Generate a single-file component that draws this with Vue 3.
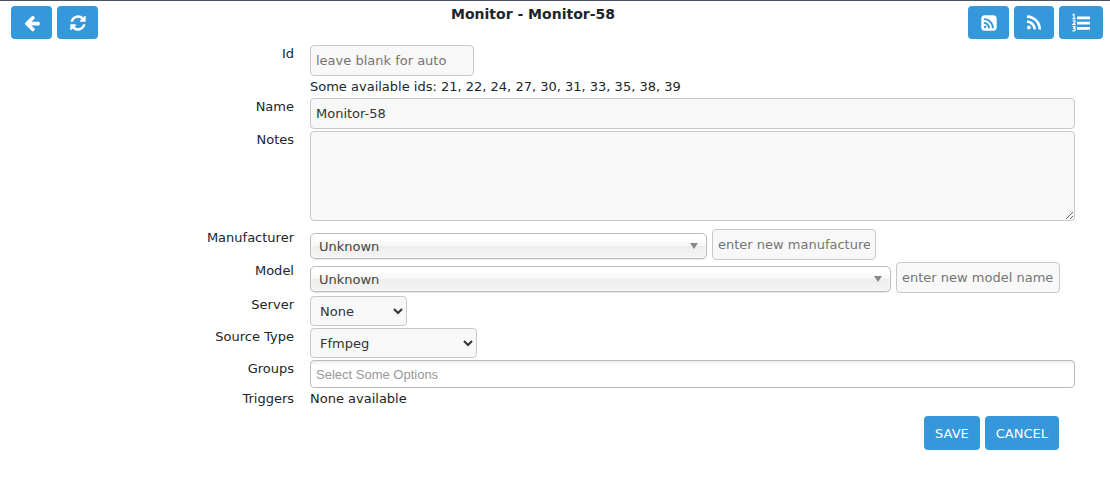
<script setup>
import { ref } from 'vue'

const id = ref('')
const name = ref('Monitor-58')
const notes = ref('')
const manufacturer = ref('Unknown')
const newManufacturer = ref('')
const model = ref('Unknown')
const newModel = ref('')
const server = ref('None')
const sourceType = ref('Ffmpeg')
const groups = ref('')
const availableIds = [21, 22, 24, 27, 30, 31, 33, 35, 38, 39]
</script>

<template>
  <div class="page">
    <header class="bar">
      <div class="tools">
        <button type="button" class="btn icon-btn" aria-label="Back">
          <svg width="18" height="18" viewBox="0 0 1792 1792"><path d="M1664 896v128q0 53-32.5 90.5t-84.5 37.5h-704l293 294q38 36 38 90t-38 90l-75 76q-37 37-90 37-52 0-91-37l-651-652q-37-37-37-90 0-52 37-91l651-650q38-38 91-38 52 0 90 38l75 74q38 38 38 91t-38 91l-293 293h704q52 0 84.5 37.5t32.5 90.5z" /></svg>
        </button>
        <button type="button" class="btn icon-btn" aria-label="Refresh">
          <svg width="18" height="18" viewBox="0 0 1792 1792"><path d="M1639 1056q0 5-1 7-64 268-268 434.5t-478 166.5q-146 0-282.5-55t-243.5-157l-129 129q-19 19-45 19t-45-19-19-45v-448q0-26 19-45t45-19h448q26 0 45 19t19 45-19 45l-137 137q71 66 161 102t187 36q134 0 250-65t186-179q11-17 53-117 8-23 30-23h192q13 0 22.5 9.5t9.5 22.5zm25-800v448q0 26-19 45t-45 19h-448q-26 0-45-19t-19-45 19-45l138-138q-148-137-349-137-134 0-250 65t-186 179q-11 17-53 117-8 23-30 23h-199q-13 0-22.5-9.5t-9.5-22.5v-7q65-268 270-434.5t480-166.5q146 0 284 55.5t245 156.5l130-129q19-19 45-19t45 19 19 45z" /></svg>
        </button>
      </div>
      <h1>Monitor - Monitor-58</h1>
      <div class="tools">
        <button type="button" class="btn icon-btn" aria-label="Probe">
          <svg width="18" height="18" viewBox="0 0 1792 1792"><path d="M640 1280q0-53-37.5-90.5t-90.5-37.5-90.5 37.5-37.5 90.5 37.5 90.5 90.5 37.5 90.5-37.5 37.5-90.5zm351 94q-13-232-177-396t-396-177q-14-1-24 9t-10 23v128q0 13 8.5 22t21.5 10q154 11 264 121t121 264q1 13 10 21.5t22 8.5h128q13 0 23-10t9-24zm384 1q-5-154-56-297.5t-139.5-260-205-205-260-139.5-297.5-56q-14-1-23 9-10 10-10 23v128q0 13 9 22t22 10q204 7 378 111.5t278.5 278.5 111.5 378q1 13 10 22t22 9h128q13 0 23-10 11-9 9-23zm289-959v960q0 119-84.5 203.5t-203.5 84.5h-960q-119 0-203.5-84.5t-84.5-203.5v-960q0-119 84.5-203.5t203.5-84.5h960q119 0 203.5 84.5t84.5 203.5z" /></svg>
        </button>
        <button type="button" class="btn icon-btn narrow" aria-label="Onvif">
          <svg width="18" height="18" viewBox="0 0 1792 1792"><path d="M576 1344q0 80-56 136t-136 56-136-56-56-136 56-136 136-56 136 56 56 136zm512 123q2 28-17 48-18 21-47 21h-135q-25 0-43-16.5t-20-41.5q-22-229-184.5-391.5t-391.5-184.5q-25-2-41.5-20t-16.5-43v-135q0-29 21-47 17-17 43-17h5q160 13 306 80.5t259 181.5q114 113 181.5 259t80.5 306zm512 2q2 27-18 47-18 20-46 20h-143q-26 0-44.5-17.5t-19.5-42.5q-12-215-101-408.5t-231.5-336-336-231.5-408.5-102q-25-1-42.5-19.5t-17.5-43.5v-143q0-28 20-46 18-18 44-18h3q262 13 501.5 120t425.5 294q187 186 294 425.5t120 501.5z" /></svg>
        </button>
        <button type="button" class="btn icon-btn wide" aria-label="Presets">
          <svg width="18" height="20" viewBox="0 0 18 20">
            <path d="M5 3.5h13v2.7H5zM5 8.7h13v2.7H5zM5 14h13v2.7H5z" />
            <path class="line" d="M.5 2 2 1.2V5.500M.4 5.600h3.200M.6 8.300q2.600-1.300 2.600.2Q3.200 9.400.8 11.400H3.600M.6 13.500H3.200L1.800 15.300Q3.400 15.400 3.300 16.700 2.900 18.400.5 17.700" />
          </svg>
        </button>
      </div>
    </header>

    <form class="form" @submit.prevent>
      <div class="row">
        <label for="id">Id</label>
        <div class="field stack">
          <input id="id" v-model="id" class="box short" type="text" placeholder="leave blank for auto">
          <span>Some available ids: {{ availableIds.join(', ') }}</span>
        </div>
      </div>
      <div class="row">
        <label for="name">Name</label>
        <div class="field"><input id="name" v-model="name" class="box full" type="text"></div>
      </div>
      <div class="row notes">
        <label for="notes">Notes</label>
        <div class="field"><textarea id="notes" v-model="notes" class="box full"></textarea></div>
      </div>
      <div class="row">
        <label for="manufacturer">Manufacturer</label>
        <div class="field">
          <div class="chosen maker">
            <select id="manufacturer" v-model="manufacturer"><option>Unknown</option></select>
          </div>
          <input v-model="newManufacturer" class="box short" type="text" aria-label="New manufacturer" placeholder="enter new manufacturer name">
        </div>
      </div>
      <div class="row model-row">
        <label for="model">Model</label>
        <div class="field">
          <div class="chosen model">
            <select id="model" v-model="model"><option>Unknown</option></select>
          </div>
          <input v-model="newModel" class="box short" type="text" aria-label="New model" placeholder="enter new model name">
        </div>
      </div>
      <div class="row">
        <label for="server">Server</label>
        <div class="field"><select id="server" v-model="server" class="box server"><option>None</option></select></div>
      </div>
      <div class="row">
        <label for="source">Source Type</label>
        <div class="field"><select id="source" v-model="sourceType" class="box source"><option>Ffmpeg</option></select></div>
      </div>
      <div class="row">
        <label for="groups">Groups</label>
        <div class="field"><input id="groups" v-model="groups" class="groups full" type="text" placeholder="Select Some Options"></div>
      </div>
      <div class="row">
        <span class="label">Triggers</span>
        <div class="field">None available</div>
      </div>
      <div class="actions">
        <button type="submit" class="btn">SAVE</button>
        <button type="button" class="btn">CANCEL</button>
      </div>
    </form>
  </div>
</template>

<style>
body {
  margin: 0;
  background: #fff;
}
</style>

<style scoped>
.page {
  border-top: 1px solid #485460;
  color: #212529;
  font: 13px/17px "DejaVu Sans", Verdana, sans-serif;
}
.page * {
  box-sizing: border-box;
}
.bar {
  display: flex;
  align-items: flex-start;
  padding: 5px 7px 6px 11px;
}
.tools {
  display: flex;
  gap: 5px;
}
h1 {
  flex: 1;
  margin: 0;
  font-size: 14px;
  line-height: 17px;
  text-align: center;
}
.btn {
  height: 34px;
  padding: 0 11px;
  border: 0;
  border-radius: 4px;
  background: #3498db;
  color: #fff;
  font: inherit;
}
.icon-btn {
  display: flex;
  align-items: center;
  justify-content: center;
  width: 41px;
  height: 33px;
  padding: 0;
}
.narrow {
  width: 40px;
}
.wide {
  width: 44px;
}
.icon-btn svg {
  fill: #fff;
}
.icon-btn .line {
  fill: none;
  stroke: #fff;
  stroke-width: 1.2;
}
.form {
  display: flex;
  flex-direction: column;
  gap: 2px;
  padding-right: 35px;
}
.row {
  display: grid;
  grid-template-columns: 294px minmax(0, 1fr);
  column-gap: 16px;
}
label,
.label {
  text-align: right;
}
.notes {
  margin-bottom: 6px;
}
.model-row {
  margin-bottom: 1px;
}
.field {
  display: flex;
  align-items: center;
  gap: 5px;
}
.stack {
  flex-direction: column;
  align-items: flex-start;
  gap: 2px;
  padding-bottom: 1px;
}
.box {
  height: 31px;
  margin: 0;
  padding: 5px;
  border: 1px solid #c8c8c8;
  border-radius: 4px;
  background-color: #f8f8f8;
  color: #333;
  font: inherit;
}
.box::placeholder {
  color: #757575;
}
.full {
  width: 100%;
}
.short {
  width: 164px;
}
textarea.box {
  height: 90px;
  resize: both;
}
select.box {
  height: 30px;
}
.server {
  width: 97px;
}
.source {
  width: 167px;
}
.chosen {
  position: relative;
  padding-top: 2px;
}
.chosen::after {
  content: "";
  position: absolute;
  top: 12px;
  right: 9px;
  border: 4px solid transparent;
  border-top: 6px solid #888;
  border-bottom: 0;
  pointer-events: none;
}
.chosen select {
  display: block;
  width: 100%;
  height: 26px;
  padding: 2px 8px 0;
  appearance: none;
  border: 1px solid #bbb;
  border-radius: 5px;
  background: linear-gradient(#fff 20%, #f6f6f6 50%, #eee 52%, #f4f4f4 100%);
  box-shadow: 0 0 3px #fff inset, 0 1px 1px rgba(0, 0, 0, 0.1);
  color: #444;
  font: inherit;
}
.maker {
  width: 397px;
}
.model {
  width: 581px;
}
.groups {
  height: 28px;
  padding: 0 5px;
  border: 1px solid #bbb;
  border-radius: 4px;
  background: linear-gradient(#eee 1%, #fff 15%);
  font: 13px "Liberation Sans", Arial, sans-serif;
}
.groups::placeholder {
  color: #999;
}
.actions {
  display: flex;
  justify-content: flex-end;
  gap: 5px;
  padding: 7px 16px 0 0;
}
</style>
